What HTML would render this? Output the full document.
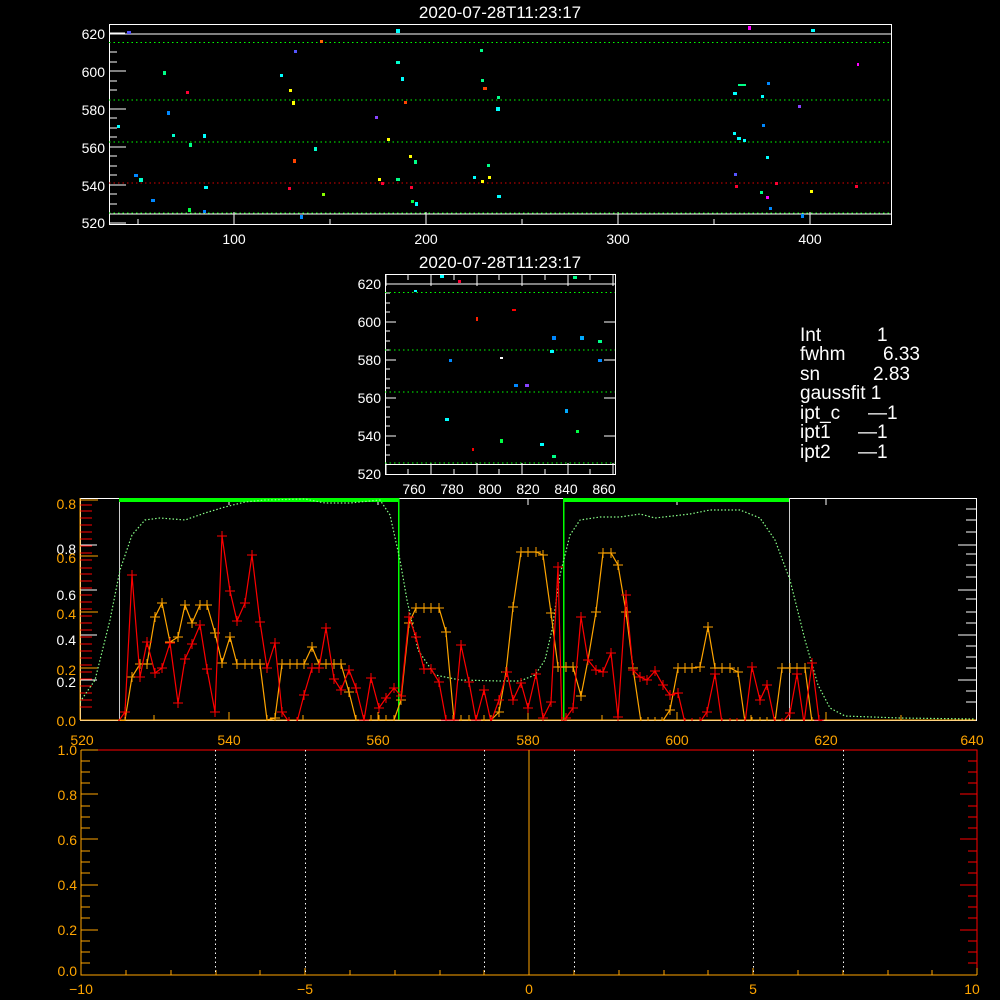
<!DOCTYPE html><html><head><style>html,body{margin:0;background:#000;}svg{display:block;font-family:"Liberation Sans",sans-serif;}path,rect,polyline{shape-rendering:crispEdges;}</style></head><body>
<svg width="1000" height="1000" viewBox="0 0 1000 1000" xmlns="http://www.w3.org/2000/svg">
<defs>
<marker id="pr" markerWidth="12" markerHeight="12" refX="6" refY="6" markerUnits="userSpaceOnUse"><path d="M1 6H11M6 1V11" stroke="#f00" stroke-width="1.3"/></marker>
<marker id="po" markerWidth="12" markerHeight="12" refX="6" refY="6" markerUnits="userSpaceOnUse"><path d="M1 6H11M6 1V11" stroke="#ffa500" stroke-width="1.3"/></marker>
<clipPath id="c1"><rect x="80" y="498" width="896" height="223"/></clipPath>
</defs>
<!-- TOP PLOT -->
<text x="500" y="18" fill="#fff" font-size="17" text-anchor="middle">2020-07-28T11:23:17</text>
<rect x="109.5" y="24.5" width="782" height="200" fill="none" stroke="#fff"/>
<g stroke="#fff" stroke-width="1">
<path d="M109 33H125M109 52H117M109 62H117M109 71H117M109 81H117M109 90H117M109 109H117M109 118H117M109 128H117M109 137H117M109 156H117M109 166H117M109 175H117M109 194H117M109 204H117M109 71H126M109 109H126M109 147H126M109 185H126M109 223H126"/>
<path d="M234 224V212M426 224V212M618 224V212M810 224V212M138 224V219M330 224V219M522 224V219M714 224V219"/>
<path d="M109 34H892M109 214H892" />
</g>
<g fill="#fff" font-size="14" text-anchor="end"><text x="105" y="39">620</text><text x="105" y="77">600</text><text x="105" y="115">580</text><text x="105" y="153">560</text><text x="105" y="191">540</text><text x="105" y="228">520</text></g>
<g fill="#fff" font-size="14" text-anchor="middle"><text x="234" y="244">100</text><text x="426" y="244">200</text><text x="618" y="244">300</text><text x="810" y="244">400</text></g>
<g stroke-dasharray="1.5 3" stroke-width="1"><path d="M109 42.5H892M109 100H892M109 142H892M109 213H892" stroke="#0f0"/><path d="M109 183H892" stroke="#d00"/></g>
<g>
<rect x="127" y="31" width="4" height="3" fill="#55f"/><rect x="117" y="125" width="3" height="3" fill="#0ff"/><rect x="134" y="174" width="4" height="3" fill="#08f"/><rect x="139" y="178" width="4" height="4" fill="#0fc"/><rect x="151" y="199" width="4" height="3" fill="#08f"/><rect x="163" y="71" width="3" height="4" fill="#0f8"/><rect x="167" y="111" width="3" height="4" fill="#08f"/><rect x="172" y="134" width="3" height="3" fill="#0fc"/><rect x="186" y="91" width="3" height="3" fill="#f03"/><rect x="189" y="143" width="3" height="4" fill="#0f8"/><rect x="188" y="208" width="3" height="4" fill="#0f4"/><rect x="203" y="134" width="3" height="4" fill="#0ff"/><rect x="204" y="186" width="4" height="3" fill="#0ff"/><rect x="203" y="210" width="3" height="3" fill="#08f"/><rect x="280" y="74" width="3" height="3" fill="#0ff"/><rect x="289" y="89" width="3" height="3" fill="#ff0"/><rect x="292" y="101" width="3" height="4" fill="#ff0"/><rect x="294" y="50" width="3" height="3" fill="#55f"/><rect x="293" y="159" width="3" height="4" fill="#f40"/><rect x="288" y="187" width="3" height="3" fill="#f03"/><rect x="300" y="215" width="3" height="4" fill="#08f"/><rect x="314" y="147" width="3" height="4" fill="#0fc"/><rect x="320" y="40" width="3" height="3" fill="#f60"/><rect x="322" y="193" width="3" height="3" fill="#8f0"/><rect x="375" y="116" width="3" height="3" fill="#84f"/><rect x="387" y="138" width="3" height="3" fill="#ff0"/><rect x="396" y="29" width="4" height="4" fill="#0ff"/><rect x="396" y="61" width="4" height="3" fill="#0fc"/><rect x="401" y="77" width="3" height="4" fill="#0ff"/><rect x="404" y="101" width="3" height="3" fill="#f40"/><rect x="378" y="178" width="3" height="3" fill="#ff0"/><rect x="381" y="182" width="3" height="3" fill="#f03"/><rect x="396" y="178" width="4" height="3" fill="#0f8"/><rect x="409" y="155" width="3" height="3" fill="#ff0"/><rect x="414" y="160" width="3" height="4" fill="#0f8"/><rect x="410" y="186" width="3" height="3" fill="#f03"/><rect x="411" y="200" width="3" height="3" fill="#0f4"/><rect x="415" y="202" width="3" height="4" fill="#0ff"/><rect x="480" y="49" width="3" height="3" fill="#0f8"/><rect x="481" y="79" width="3" height="3" fill="#0f8"/><rect x="483" y="87" width="4" height="3" fill="#f40"/><rect x="496" y="107" width="4" height="4" fill="#0ff"/><rect x="497" y="96" width="3" height="3" fill="#0f8"/><rect x="473" y="176" width="3" height="3" fill="#0ff"/><rect x="481" y="180" width="3" height="3" fill="#ff0"/><rect x="487" y="164" width="3" height="3" fill="#0f8"/><rect x="488" y="176" width="3" height="3" fill="#ff0"/><rect x="497" y="195" width="4" height="3" fill="#0ff"/><rect x="733" y="92" width="4" height="3" fill="#0ff"/><rect x="738" y="84" width="8" height="2" fill="#0f8"/><rect x="733" y="132" width="3" height="3" fill="#0ff"/><rect x="737" y="137" width="4" height="3" fill="#0ff"/><rect x="743" y="139" width="3" height="3" fill="#0ff"/><rect x="734" y="173" width="3" height="3" fill="#55f"/><rect x="735" y="185" width="3" height="3" fill="#f03"/><rect x="761" y="95" width="3" height="3" fill="#0ff"/><rect x="767" y="82" width="3" height="3" fill="#08f"/><rect x="762" y="124" width="3" height="3" fill="#08f"/><rect x="766" y="156" width="3" height="3" fill="#0ff"/><rect x="766" y="196" width="3" height="3" fill="#f0f"/><rect x="769" y="207" width="3" height="3" fill="#08f"/><rect x="760" y="191" width="3" height="3" fill="#0f8"/><rect x="775" y="182" width="3" height="3" fill="#f03"/><rect x="748" y="26" width="3" height="4" fill="#f0f"/><rect x="798" y="105" width="3" height="3" fill="#84f"/><rect x="801" y="214" width="3" height="4" fill="#08f"/><rect x="810" y="190" width="3" height="3" fill="#ff0"/><rect x="811" y="29" width="4" height="3" fill="#0ff"/><rect x="855" y="185" width="3" height="3" fill="#f03"/><rect x="857" y="63" width="2" height="3" fill="#f0f"/>
</g>
<!-- SMALL PLOT -->
<text x="500" y="268" fill="#fff" font-size="17" text-anchor="middle">2020-07-28T11:23:17</text>
<rect x="385.5" y="274.5" width="230" height="200" fill="none" stroke="#fff"/>
<g stroke="#fff"><path d="M385 284H615M385 464.5H615"/>
<path d="M385 322H396M385 360H396M385 398H396M385 436H396M604 322H615M604 360H615M604 398H615M604 436H615M386 474V463M431 474V463M477 474V463M522 474V463M568 474V463M613 474V463M386 275V286M431 275V286M477 275V286M522 275V286M568 275V286M613 275V286"/>
<path d="M385 293H390M385 303H390M385 312H390M385 331H390M385 341H390M385 350H390M385 369H390M385 379H390M385 388H390M385 407H390M385 417H390M385 426H390M385 445H390M385 455H390M408 474V469M454 474V469M499 474V469M545 474V469M590 474V469M408 275V280M454 275V280M499 275V280M545 275V280M590 275V280"/></g>
<g stroke="#0f0" stroke-dasharray="1.5 3"><path d="M385 292.5H615M385 350H615M385 392H615M385 463H615"/></g>
<g fill="#fff" font-size="14" text-anchor="end"><text x="381" y="289">620</text><text x="381" y="327">600</text><text x="381" y="365">580</text><text x="381" y="403">560</text><text x="381" y="441">540</text><text x="381" y="479">520</text></g>
<g fill="#fff" font-size="14" text-anchor="middle"><text x="414" y="494">760</text><text x="452" y="494">780</text><text x="490" y="494">800</text><text x="528" y="494">820</text><text x="566" y="494">840</text><text x="604" y="494">860</text></g>
<g><rect x="414" y="290" width="3" height="2" fill="#0ff"/><rect x="440" y="275" width="4" height="3" fill="#0ff"/><rect x="458" y="280" width="3" height="3" fill="#f03"/><rect x="476" y="317" width="2" height="4" fill="#f20"/><rect x="449" y="359" width="3" height="3" fill="#08f"/><rect x="445" y="418" width="4" height="3" fill="#0ff"/><rect x="472" y="448" width="2" height="3" fill="#f00"/><rect x="500" y="357" width="3" height="2" fill="#fff"/><rect x="500" y="439" width="3" height="4" fill="#0f4"/><rect x="512" y="309" width="4" height="2" fill="#f00"/><rect x="514" y="384" width="4" height="3" fill="#08f"/><rect x="525" y="384" width="4" height="3" fill="#84f"/><rect x="540" y="443" width="4" height="3" fill="#0ff"/><rect x="550" y="350" width="4" height="3" fill="#0ff"/><rect x="552" y="336" width="4" height="4" fill="#08f"/><rect x="552" y="455" width="4" height="3" fill="#0f8"/><rect x="565" y="409" width="3" height="4" fill="#0af"/><rect x="576" y="430" width="3" height="3" fill="#0f4"/><rect x="573" y="276" width="4" height="3" fill="#0f8"/><rect x="580" y="336" width="4" height="4" fill="#0af"/><rect x="598" y="340" width="4" height="3" fill="#0f8"/><rect x="598" y="359" width="4" height="3" fill="#08f"/></g>
<!-- TEXT PANEL -->
<g fill="#fff" font-size="19"><text x="800" y="341">Int</text><text x="877" y="341">1</text><text x="800" y="360">fwhm</text><text x="883" y="360">6.33</text><text x="800" y="380">sn</text><text x="873" y="380">2.83</text><text x="800" y="399">gaussfit 1</text><text x="800" y="419">ipt_c</text><text x="868" y="419">—1</text><text x="800" y="438">ipt1</text><text x="858" y="438">—1</text><text x="800" y="458">ipt2</text><text x="858" y="458">—1</text></g>
<!-- MIDDLE PLOT -->
<rect x="80.5" y="498.5" width="896" height="222" fill="none" stroke="#fff"/>
<g stroke="#fff"><path d="M229 498V505M378 498V505M528 498V505M677 498V505M826 498V505M976 545H958M976 590H958M976 635H958M976 680H958M976 509H966M976 520H966M976 532H966M976 554H966M976 565H966M976 577H966M976 599H966M976 612H966M976 623H966M976 646H966M976 657H966M976 668H966M976 691H966M976 702H966M97 545H80M97 590H80M97 635H80M97 680H80"/></g>
<g stroke="#f00"><path d="M80 505H92M80 511H92M80 518H92M80 525H92M80 532H92M80 539H92M80 546H92M80 553H92M80 560H92M80 568H92M80 574H92M80 581H92M80 588H92M80 595H92M80 602H92M80 609H92M80 616H92M80 623H92M80 630H92M80 637H92M80 644H92M80 651H92M80 658H92M80 665H92M80 672H92M80 679H92M80 686H92M80 693H92M80 700H92M80 707H92"/></g>
<g stroke="#ffa500"><path d="M80 500H98M80 556H98M80 612H98M80 668H98M80 720H976M80 720V498M154 720V715M229 720V712M303 720V715M378 720V712M453 720V715M528 720V712M602 720V715M677 720V712M751 720V715M826 720V712M901 720V715"/></g>
<g font-size="14" text-anchor="end"><text x="76" y="509" fill="#ffa500">0.8</text><text x="76" y="554" fill="#fff">0.8</text><text x="76" y="563" fill="#ffa500">0.6</text><text x="76" y="600" fill="#fff">0.6</text><text x="76" y="619" fill="#ffa500">0.4</text><text x="76" y="645" fill="#fff">0.4</text><text x="76" y="675" fill="#ffa500">0.2</text><text x="76" y="687" fill="#fff">0.2</text><text x="76" y="726" fill="#ffa500">0.0</text></g>
<g font-size="14" text-anchor="middle" fill="#ffa500"><text x="82" y="745">520</text><text x="229" y="745">540</text><text x="378" y="745">560</text><text x="528" y="745">580</text><text x="677" y="745">600</text><text x="826" y="745">620</text><text x="972" y="745">640</text></g>
<g clip-path="url(#c1)">
<path d="M119.5 498V720M789.5 498V720" stroke="#ccc"/>
<path d="M398.5 498V720M563.5 498V720" stroke="#0f0" stroke-width="1.5"/>
<path d="M119 500H398M563 500H789" stroke="#0f0" stroke-width="4"/>
<path d="M80 702 L95 680 L110 620 L120 570 L132 535 L145 520 L160 518 L185 520 L205 513 L225 507 L245 502 L265 500 L305 499 L325 503 L350 503 L380 500 L390 515 L400 560 L407 600 L418 650 L435 675 L460 680 L500 681 L520 681 L535 675 L545 660 L552 630 L560 575 L570 535 L580 520 L600 517 L620 517 L640 514 L655 518 L690 514 L710 510 L740 510 L760 518 L775 540 L790 580 L805 640 L818 685 L830 708 L845 716 L900 718 L975 719" fill="none" stroke="#8f8" stroke-width="1.2" stroke-dasharray="1.5 2" style="shape-rendering:auto"/>
<polyline style="shape-rendering:auto" fill="none" stroke="#ffa500" stroke-width="1.2" marker-mid="url(#po)" points="118,722 125,720 132,677 140,664 147,664 155,617 162,603 170,642 178,637 185,605 192,623 200,605 207,605 215,633 222,663 230,637 237,664 245,664 252,664 260,664 267,720 275,718 282,664 290,664 297,664 304,664 312,647 319,664 326,664 334,664 341,664 349,692 356,720 364,720 371,720 379,720 386,720 394,720 401,700 409,623 416,608 424,608 431,608 439,608 446,632 454,720 461,720 469,720 476,720 484,720 491,720 499,712 506,672 513,607 521,552 528,552 536,552 543,555 551,613 558,667 566,667 573,667 581,696 588,660 596,612 603,553 611,553 618,565 626,612 633,668 641,722 648,722 655,722 662,722 670,710 678,668 685,668 692,668 700,667 708,627 715,668 722,668 730,668 738,672 745,722 752,722 760,722 767,722 775,722 782,668 790,668 797,668 805,668 812,722 820,722"/>
<polyline style="shape-rendering:auto" fill="none" stroke="#f00" stroke-width="1.2" marker-mid="url(#pr)" points="118,722 125,712 132,575 140,677 147,642 155,673 162,668 170,643 178,703 185,659 192,644 200,625 207,669 215,712 222,536 230,591 237,621 245,603 252,555 260,622 267,668 275,643 282,712 289,722 297,722 304,695 312,668 319,668 326,628 334,679 341,690 349,670 356,688 364,720 371,678 379,708 386,698 394,688 401,696 409,617 416,637 424,669 431,669 439,682 446,720 454,720 461,645 469,682 476,720 484,690 491,722 499,700 507,672 513,700 521,683 528,708 536,674 543,718 551,702 558,567 562,723 566,718 573,708 581,617 588,660 596,670 603,672 611,653 618,717 626,595 633,670 640,677 647,680 655,671 663,685 670,695 678,693 685,723 692,723 700,722 707,712 715,674 722,723 730,723 737,723 745,723 752,667 760,700 767,685 775,723 782,723 790,713 797,674 804,723 812,663 819,720 826,723"/>
</g>
<!-- BOTTOM PLOT -->
<path d="M81 750H977V975" fill="none" stroke="#f00"/>
<path d="M81 750H98" stroke="#ffa500"/>
<path d="M81 750V975H977" fill="none" stroke="#ffa500"/>
<g stroke="#ffa500"><path d="M81 761H90M81 772H90M81 783H90M81 806H90M81 817H90M81 828H90M81 851H90M81 862H90M81 873H90M81 896H90M81 907H90M81 918H90M81 941H90M81 952H90M81 963H90M81 794H98M81 839H98M81 885H98M81 930H98"/><path d="M81 975V968M126 975V970M171 975V970M216 975V970M260 975V970M305 975V968M350 975V970M395 975V970M440 975V970M484 975V970M529 975V968M574 975V970M619 975V970M664 975V970M708 975V970M753 975V968M798 975V970M843 975V970M888 975V970M932 975V970M977 975V968"/></g>
<g stroke="#f00"><path d="M977 794H960M977 839H960M977 885H960M977 930H960M977 761H968M977 772H968M977 783H968M977 806H968M977 817H968M977 828H968M977 851H968M977 862H968M977 873H968M977 896H968M977 907H968M977 918H968M977 941H968M977 952H968M977 963H968"/></g>
<path d="M529 750V975" stroke="#ffa500"/>
<g stroke="#fff" stroke-dasharray="1.5 3"><path d="M215.5 750V975M305.5 750V975M484.5 750V975M574.5 750V975M753.5 750V975M843.5 750V975"/></g>
<g font-size="14" text-anchor="end" fill="#ffa500"><text x="77" y="755">1.0</text><text x="77" y="800">0.8</text><text x="77" y="845">0.6</text><text x="77" y="890">0.4</text><text x="77" y="935">0.2</text><text x="77" y="976">0.0</text></g>
<g font-size="14" text-anchor="middle" fill="#ffa500"><text x="81" y="994">−10</text><text x="305" y="994">−5</text><text x="529" y="994">0</text><text x="753" y="994">5</text><text x="972" y="994">10</text></g>
</svg>
</body></html>
